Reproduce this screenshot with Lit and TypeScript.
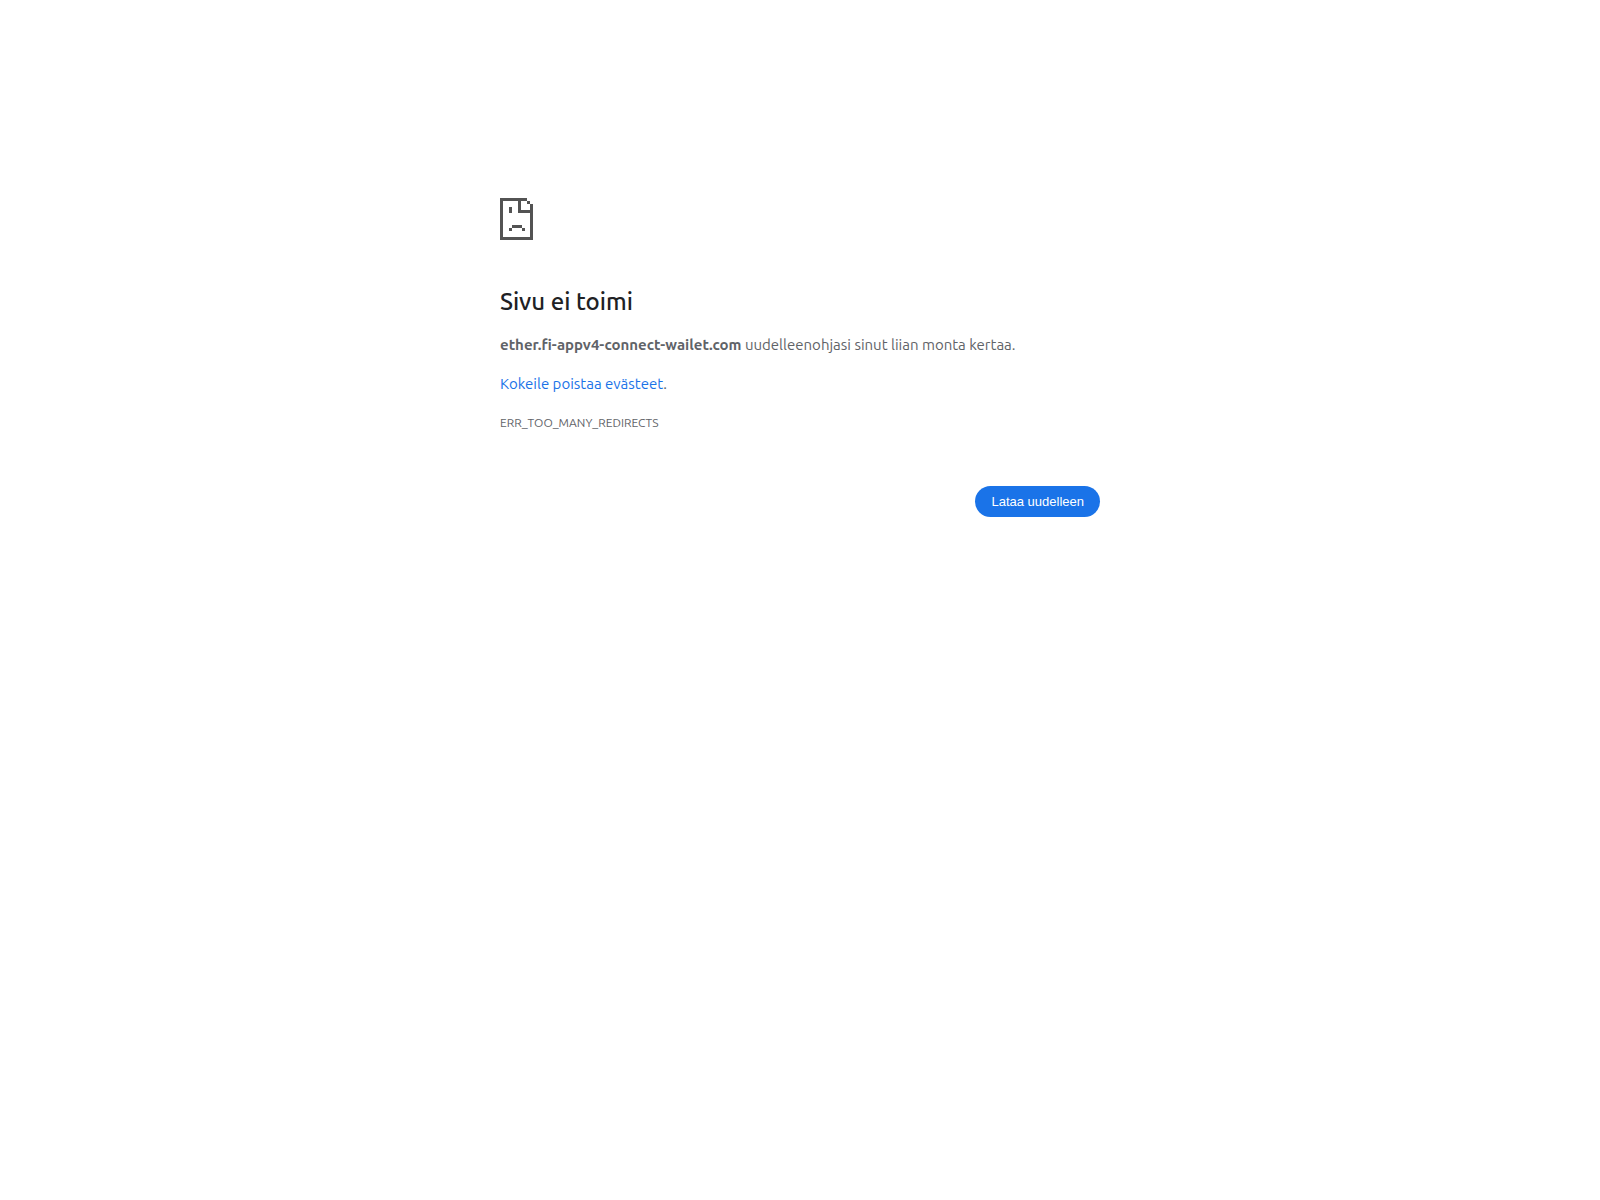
import { LitElement, html, css } from "lit";
import { customElement } from "lit/decorators.js";

@customElement("app-root")
export class AppRoot extends LitElement {
  static styles = css`
    :host {
      display: block;
      min-height: 100vh;
      background: #fff;
      color: #5f6368;
      font-family: Ubuntu, "Noto Sans", "Open Sans", sans-serif;
      font-size: 15px;
      line-height: 24px;
    }
    .page {
      box-sizing: border-box;
      max-width: 600px;
      margin: 0 auto;
      padding-top: 192px;
    }
    .icon {
      display: block;
      width: 48px;
      height: 56px;
      margin-bottom: 40px;
    }
    h1 {
      margin: 0 0 17px;
      color: #202124;
      font-size: 24px;
      font-weight: 500;
      line-height: 28px;
    }
    p {
      margin: 0 0 15px;
    }
    a {
      color: #1a73e8;
      text-decoration: none;
    }
    .code {
      font-size: 12px;
    }
    .actions {
      display: flex;
      justify-content: flex-end;
      margin-top: 51px;
    }
    button {
      border: 0;
      border-radius: 20px;
      padding: 8px 16px;
      background: #1a73e8;
      color: #fff;
      font: 13px/15px "Liberation Sans", Arial, sans-serif;
      cursor: pointer;
    }
  `;

  render() {
    return html`
      <main class="page">
        <svg class="icon" viewBox="0 0 48 56" shape-rendering="crispEdges" aria-hidden="true">
          <g fill="#535353">
            <path d="M0 6H27V9H3V45H30V12H33V48H0Z" />
            <path d="M18 9H21V18H30V21H18ZM27 9H30V12H27Z" />
            <path d="M9 15H12V21H9ZM12 33H22V36H12ZM9 36H12V39H9ZM22 36H25V39H22Z" />
          </g>
        </svg>
        <h1>Sivu ei toimi</h1>
        <p><strong>ether.fi-appv4-connect-wailet.com</strong> uudelleenohjasi sinut liian monta kertaa.</p>
        <p><a href="#cookies">Kokeile poistaa evästeet</a>.</p>
        <p class="code">ERR_TOO_MANY_REDIRECTS</p>
        <div class="actions"><button type="button">Lataa uudelleen</button></div>
      </main>
    `;
  }
}
